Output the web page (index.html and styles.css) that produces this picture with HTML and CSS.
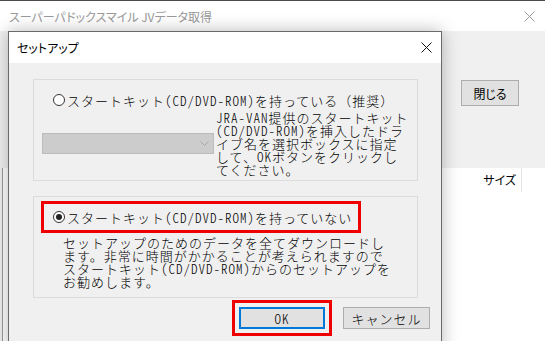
FILE: index.html
```html
<!DOCTYPE html>
<html lang="ja">
<head>
  <meta charset="UTF-8">
  <title>セットアップ</title>
  <link rel="stylesheet" href="styles.css">
</head>
<body>
  <div class="desktop">
    <div class="app">
      <div class="app-titlebar">
        <span class="app-title">スーパーパドックスマイル JVデータ取得</span>
        <svg class="app-close" width="11" height="11" viewBox="0 0 11 11"><path d="M0.5 0.5L10.5 10.5M10.5 0.5L0.5 10.5" stroke="#9a9a9a" stroke-width="1" fill="none"/></svg>
      </div>
      <div class="app-body">
        <div class="app-toolbar">
          <button class="win-btn">閉じる</button>
        </div>
        <div class="list-view">
          <div class="list-header">
            <div class="col col-fill"></div>
            <div class="col col-size">サイズ</div>
            <div class="col col-rest"></div>
          </div>
        </div>
      </div>
    </div>

    <div class="dialog">
      <div class="dialog-titlebar">
        <span class="dialog-title">セットアップ</span>
        <svg class="dialog-close" width="11" height="11" viewBox="0 0 11 11"><path d="M0.5 0.5L10.5 10.5M10.5 0.5L0.5 10.5" stroke="#111" stroke-width="1" fill="none"/></svg>
      </div>
      <div class="dialog-body">
        <div class="group group-kit">
          <label class="radio-row">
            <span class="radio"></span>
            <span class="mono">スタートキット(CD/DVD-ROM)を持っている<span class="full">（推奨）</span></span>
          </label>
          <div class="kit-options">
            <div class="combo">
              <svg class="combo-arrow" width="9" height="6" viewBox="0 0 9 6"><path d="M0.5 0.5L4.5 4.5L8.5 0.5" stroke="#a8a8a8" stroke-width="1" fill="none"/></svg>
            </div>
            <p class="mono desc">JRA-VAN提供のスタートキット<br>(CD/DVD-ROM)を挿入したドラ<br>イブ名を選択ボックスに指定<br>して、OKボタンをクリックし<br>てください。</p>
          </div>
        </div>

        <div class="group group-download">
          <div class="highlight">
            <label class="radio-row">
              <span class="radio checked"></span>
              <span class="mono">スタートキット(CD/DVD-ROM)を持っていない</span>
            </label>
          </div>
          <p class="mono desc desc-download">セットアップのためのデータを全てダウンロードし<br>ます。非常に時間がかかることが考えられますので<br>スタートキット(CD/DVD-ROM)からのセットアップを<br>お勧めします。</p>
        </div>

        <div class="dialog-actions">
          <button class="mono btn btn-default">OK</button>
          <button class="mono btn">キャンセル</button>
        </div>
      </div>
    </div>
  </div>
</body>
</html>
```

FILE: styles.css
```css
body {
  margin: 0;
  font-family: "Noto Sans CJK JP", "Noto Sans", sans-serif;
  background: #f0f0f0;
}

.desktop {
  position: relative;
  width: 545px;
  height: 341px;
  overflow: hidden;
}

/* background window */
.app {
  display: flex;
  flex-direction: column;
  height: 341px;
}

.app-titlebar {
  height: 30px;
  border-top: 1px solid #4a4a4a;
  background: #fff;
  display: flex;
  align-items: center;
  padding: 0 10px 0 9px;
}

.app-title {
  flex: 1;
  font-size: 12px;
  color: #9a9a9a;
  font-feature-settings: "palt" 1;
}

.app-body {
  flex: 1;
  display: flex;
  flex-direction: column;
  background: #f0f0f0;
}

.app-toolbar {
  display: flex;
  justify-content: flex-end;
  padding: 49px 26px 0 0;
}

.win-btn {
  width: 58px;
  height: 26px;
  padding: 0;
  background: #e1e1e1;
  border: 1px solid #adadad;
  font-family: inherit;
  font-size: 12px;
  font-feature-settings: "palt" 1;
  color: #000;
}

.list-view {
  flex: 1;
  margin: 62px 0 0 2px;
  background: #fff;
  border-left: 1px solid #9a9a9a;
}

.list-header {
  display: flex;
  height: 24px;
}

.col-fill {
  flex: 1;
}

.col-size {
  width: 70px;
  padding-right: 5px;
  text-align: right;
  font-size: 12px;
  line-height: 24px;
  font-feature-settings: "palt" 1;
  border-right: 1px solid #e5e5e5;
}

.col-rest {
  width: 23px;
}

/* setup dialog */
.dialog {
  position: absolute;
  left: 8px;
  top: 31px;
  width: 434px;
  height: 322px;
  box-sizing: border-box;
  border: 1px solid #6a6a6a;
  background: #f0f0f0;
  box-shadow: 0 0 16px rgba(0, 0, 0, 0.28);
}

.dialog-titlebar {
  height: 31px;
  background: #fff;
  display: flex;
  align-items: center;
  padding: 0 9px 0 8px;
}

.dialog-title {
  flex: 1;
  font-size: 12px;
  color: #000;
  font-feature-settings: "palt" 1;
}

.dialog-body {
  padding-top: 16px;
}

.mono {
  font-family: "Noto Sans CJK JP", sans-serif;
  font-size: 13px;
  font-weight: 300;
  letter-spacing: 1px;
  line-height: 13px;
  font-feature-settings: "hwid" 1;
  color: #000;
}

.mono .full {
  font-feature-settings: normal;
}

.group {
  margin: 0 23px 0 24px;
  height: 102px;
  box-sizing: border-box;
  border: 1px solid #dcdcdc;
}

.group-kit {
  padding-top: 13px;
}

.group-download {
  margin-top: 15px;
}

.radio-row {
  display: flex;
  align-items: center;
  gap: 2px;
  height: 14px;
  white-space: nowrap;
}

.group-kit .radio-row {
  padding-left: 19px;
}

.radio {
  width: 12px;
  height: 12px;
  box-sizing: border-box;
  border: 1px solid #333;
  border-radius: 50%;
  background: #fff;
  display: flex;
  align-items: center;
  justify-content: center;
}

.radio.checked::after {
  content: "";
  width: 6px;
  height: 6px;
  border-radius: 50%;
  background: #222;
}

.kit-options {
  display: flex;
  align-items: center;
  margin-top: 4px;
  padding-left: 8px;
}

.combo {
  width: 172px;
  height: 21px;
  box-sizing: border-box;
  border: 1px solid #bcbcbc;
  background: #cccccc;
  display: flex;
  align-items: center;
  justify-content: flex-end;
  padding-right: 4px;
}

.desc {
  margin: 0 0 0 2px;
  white-space: nowrap;
}

.highlight {
  width: 320px;
  height: 32px;
  box-sizing: border-box;
  margin: 4px 0 0 7px;
  border: 3px solid #ee0000;
  display: flex;
  align-items: center;
  padding-left: 9px;
}

.desc-download {
  margin: 3px 0 0 29px;
}

.dialog-actions {
  display: flex;
  justify-content: flex-end;
  gap: 18px;
  margin-top: 9px;
  padding-right: 11px;
}

.btn {
  width: 87px;
  height: 22px;
  padding: 0;
  background: #e1e1e1;
  border: 1px solid #adadad;
}

.btn-default {
  width: 86px;
  border: 2px solid #0078d7;
  outline: 3px solid #ee0000;
  outline-offset: 4px;
}
```
